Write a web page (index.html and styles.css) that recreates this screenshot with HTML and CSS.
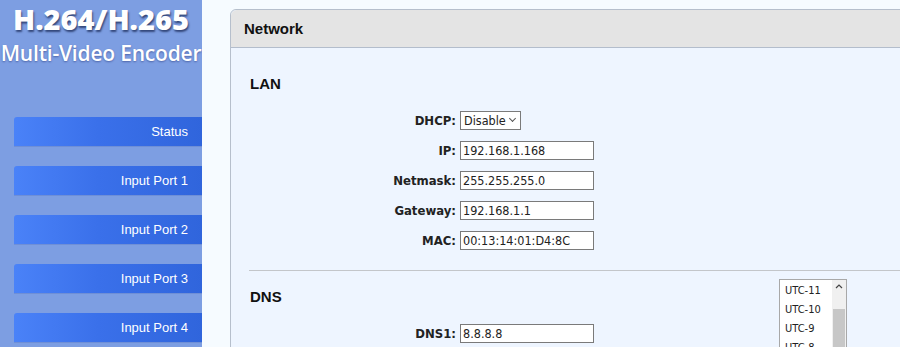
FILE: index.html
```html
<!DOCTYPE html>
<html lang="en">
<head>
  <meta charset="UTF-8">
  <title>Network</title>
  <link rel="stylesheet" href="styles.css">
</head>
<body>

  <!-- Menu lateral -->
  <div class="sidebar">
    <div class="logo">
      <div class="logo-main">H.264/H.265</div>
      <div class="logo-sub">Multi-Video Encoder</div>
    </div>
    <div class="menu">
      <a class="menu-item">Status</a>
      <a class="menu-item">Input Port 1</a>
      <a class="menu-item">Input Port 2</a>
      <a class="menu-item">Input Port 3</a>
      <a class="menu-item">Input Port 4</a>
    </div>
  </div>

  <!-- Contenido -->
  <div class="main">
    <div class="panel">
      <div class="panel-title">Network</div>
      <div class="panel-body">

        <div class="section">
          <h3>LAN</h3>
          <div class="form-grid">
            <label>DHCP:</label>
            <div class="select-wrap"><select class="dhcp"><option>Disable</option><option>Enable</option></select></div>
            <label>IP:</label>
            <div><input type="text" value="192.168.1.168"></div>
            <label>Netmask:</label>
            <div><input type="text" value="255.255.255.0"></div>
            <label>Gateway:</label>
            <div><input type="text" value="192.168.1.1"></div>
            <label>MAC:</label>
            <div><input type="text" value="00:13:14:01:D4:8C"></div>
          </div>
        </div>

        <div class="section sep">
          <h3>DNS</h3>
          <div class="form-grid">
            <label>DNS1:</label>
            <div><input type="text" value="8.8.8.8"></div>
          </div>
        </div>

      </div>
    </div>

    <!-- Lista de zona horaria abierta -->
    <div class="tz-list">
      <div class="tz-options">
        <div>UTC-11</div>
        <div>UTC-10</div>
        <div>UTC-9</div>
        <div>UTC-8</div>
      </div>
      <div class="tz-scroll">
        <svg class="tz-arrow" width="14" height="19" viewBox="0 0 14 19">
          <path d="M4 8 L7 5 L10 8" fill="none" stroke="#444" stroke-width="1.2"/>
        </svg>
        <div class="tz-thumb"></div>
      </div>
    </div>
  </div>

</body>
</html>
```

FILE: styles.css
```css
body {
  margin: 0;
  height: 347px;
  overflow: hidden;
  display: flex;
  font-family: Arial, "Liberation Sans", sans-serif;
  background: #f6fbff;
}

.sidebar {
  width: 202px;
  flex-shrink: 0;
  background: #7d9ee2;
  height: 347px;
  overflow: hidden;
}

.logo {
  text-align: center;
  color: #fff;
  font-family: "Open Sans", sans-serif;
  padding-top: 3px;
}

.logo-main {
  font-size: 29px;
  font-weight: 800;
  line-height: 32px;
  letter-spacing: 0;
  text-shadow: 1px 2px 2px #33477a;
}

.logo-sub {
  font-size: 21px;
  font-weight: 600;
  line-height: 36px;
  letter-spacing: -0.2px;
  white-space: nowrap;
  margin: 0 -10px;
  text-shadow: 0 1px 2px #4d64a8;
}

.menu {
  margin-top: 46px;
  padding-left: 14px;
  display: flex;
  flex-direction: column;
  gap: 20px;
}

.menu-item {
  display: block;
  height: 29px;
  line-height: 29px;
  text-align: right;
  padding-right: 14px;
  font-size: 13px;
  color: #fff;
  border-radius: 3px 0 0 0;
  background: linear-gradient(to right, #4a82f8 0%, #3a70ea 45%, #3065dc 100%);
  box-shadow: 0 1px 0 #6f8fd6;
}

.main {
  flex: 1;
  position: relative;
  padding: 9px 0 0 28px;
  height: 347px;
  box-sizing: border-box;
  overflow: hidden;
}

.panel {
  width: 700px;
  height: 345px;
  box-sizing: border-box;
  border: 1px solid #b6bfcc;
  border-radius: 6px 0 0 0;
  background: #eef5ff;
}

.panel-title {
  height: 37px;
  line-height: 38px;
  padding-left: 13px;
  background: #e4e4e4;
  border-bottom: 1px solid #b3bdcc;
  border-radius: 6px 0 0 0;
  font-weight: bold;
  font-size: 15px;
  color: #111;
}

.panel-body {
  padding: 0 0 0 18px;
}

.section h3 {
  margin: 0;
  font-size: 15px;
  padding: 27px 0 19px 1px;
  color: #111;
}

.section.sep {
  border-top: 1px solid #c3c6ca;
  margin-top: 20px;
}

.section.sep h3 {
  padding: 17px 0 19px 1px;
}

.form-grid {
  display: grid;
  grid-template-columns: 207px auto;
  column-gap: 4px;
  row-gap: 11px;
  align-items: center;
}

.form-grid label {
  text-align: right;
  font-family: "DejaVu Sans Condensed", "DejaVu Sans", sans-serif;
  font-weight: bold;
  font-size: 13px;
  color: #222;
}

.form-grid input {
  box-sizing: border-box;
  width: 134px;
  height: 19px;
  padding: 0 2px;
  border: 1px solid #7a7a7a;
  border-radius: 0;
  font-family: "DejaVu Sans Condensed", "DejaVu Sans", sans-serif;
  font-size: 12.5px;
  color: #222;
  background: #fff;
  display: block;
}

.select-wrap {
  position: relative;
  width: 61px;
}

.select-wrap::after {
  content: "";
  position: absolute;
  right: 6px;
  top: 5px;
  width: 4px;
  height: 4px;
  border-right: 1px solid #555;
  border-bottom: 1px solid #555;
  transform: rotate(45deg);
  pointer-events: none;
}

.form-grid select.dhcp {
  appearance: none;
  box-sizing: border-box;
  height: 19px;
  width: 61px;
  padding: 0 0 0 3px;
  border: 1px solid #7a7a7a;
  border-radius: 0;
  font-family: "DejaVu Sans Condensed", "DejaVu Sans", sans-serif;
  font-size: 12.5px;
  color: #222;
  background: #fff;
  display: block;
}

.tz-list {
  position: absolute;
  left: 577px;
  top: 279px;
  width: 66px;
  height: 80px;
  border: 1px solid #a8a8a8;
  background: #fff;
  display: flex;
}

.tz-options {
  flex: 1;
  padding: 1px 0 0 5px;
  font-family: "DejaVu Sans Condensed", "DejaVu Sans", sans-serif;
  font-size: 11px;
  color: #222;
}

.tz-options div {
  height: 19px;
  line-height: 19px;
}

.tz-scroll {
  width: 14px;
  background: #f0f0f0;
  display: flex;
  flex-direction: column;
}

.tz-arrow {
  display: block;
}

.tz-thumb {
  flex: 1;
  margin: 10px 1px 0 1px;
  background: #c7c7c7;
}
```
